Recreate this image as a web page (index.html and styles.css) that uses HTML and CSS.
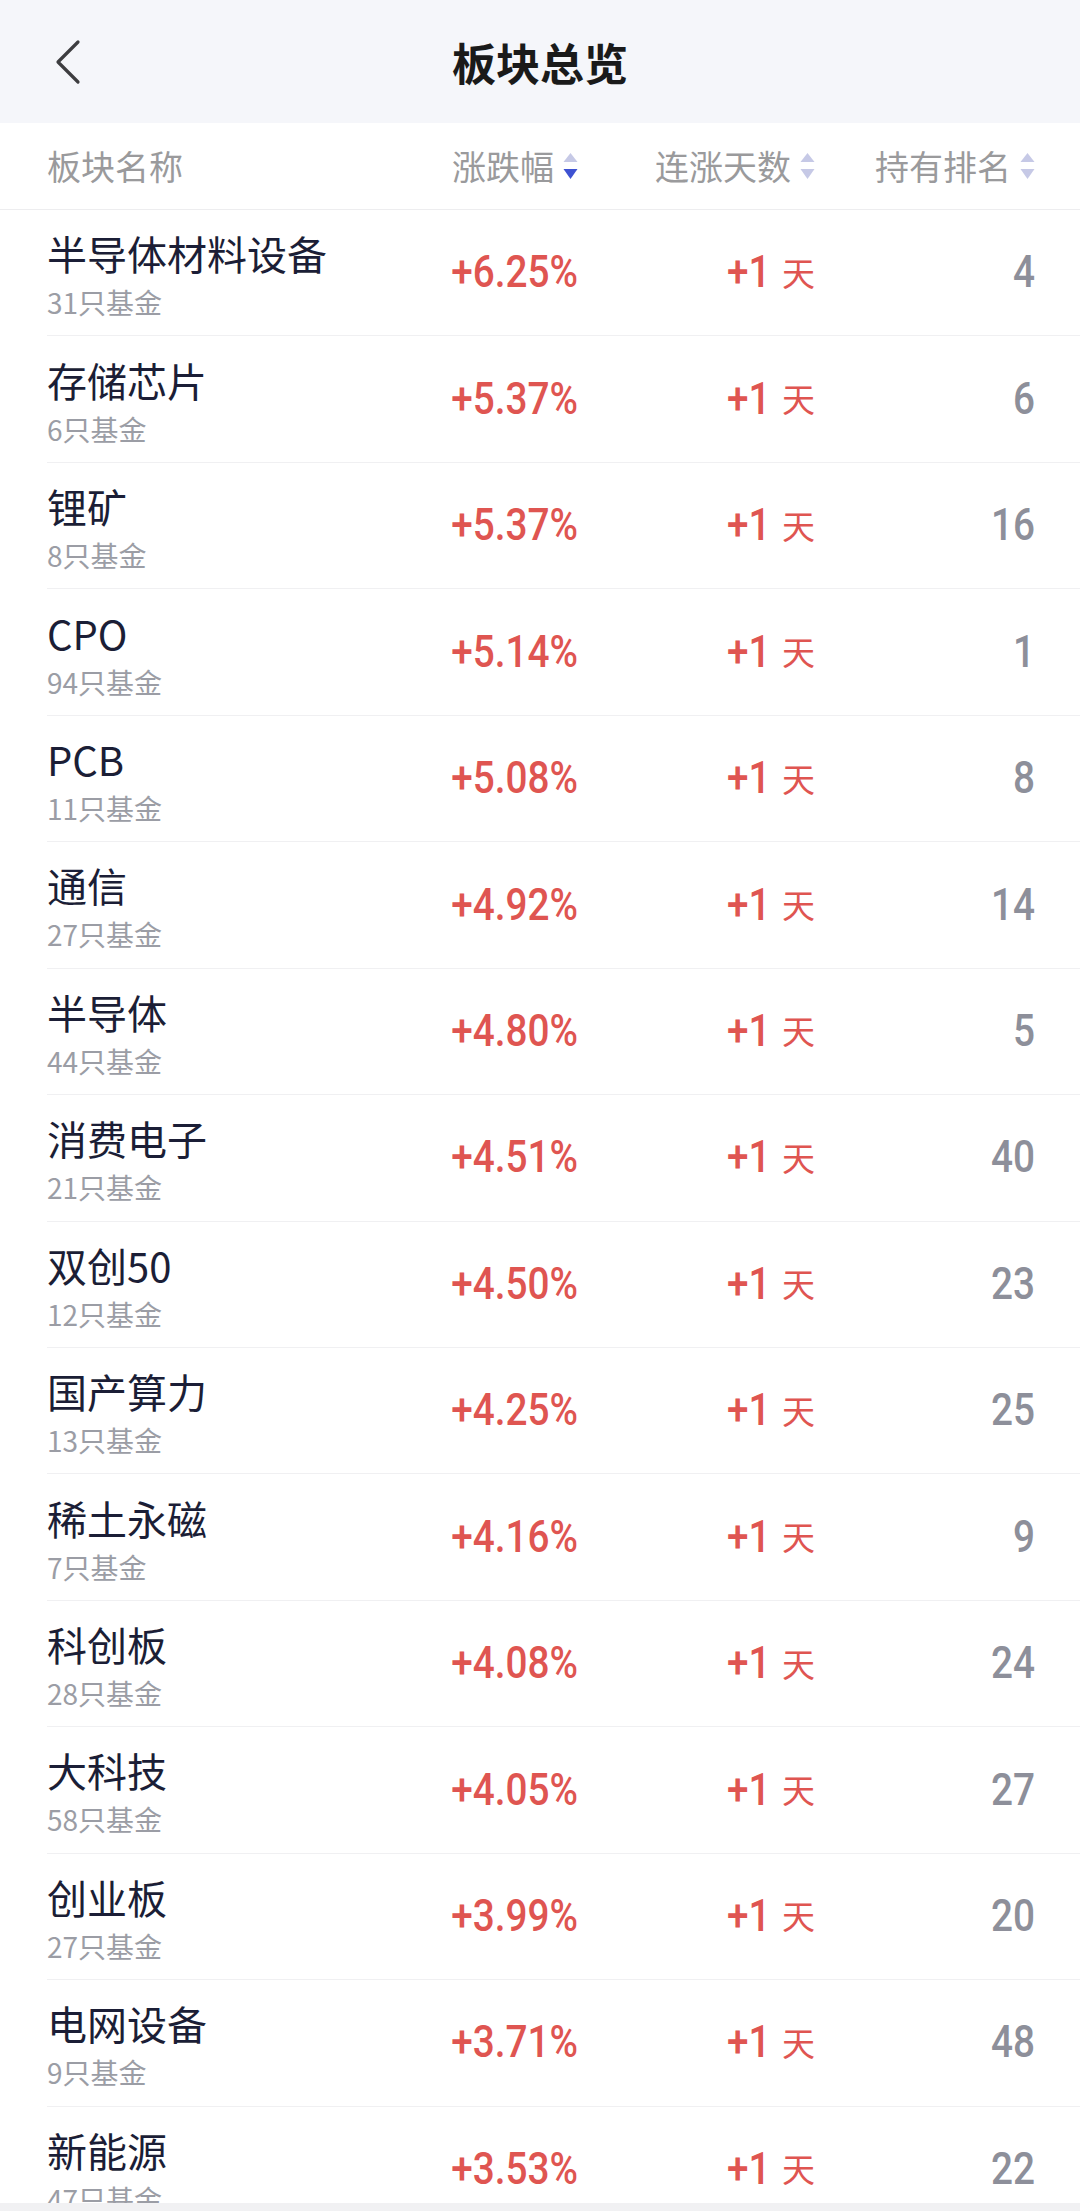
FILE: index.html
```html
<!DOCTYPE html>
<html lang="zh-CN">
<head>
    <meta charset="UTF-8">
    <meta name="viewport" content="width=device-width, initial-scale=1.0">
    <title>板块总览</title>
    <link rel="stylesheet" href="styles.css">
</head>
<body>
<div class="topbar">
    <div class="back">
        <svg width="30" height="46" viewBox="0 0 30 46">
            <path d="M24 3 L4 23 L24 43" fill="none" stroke="#3d3d40" stroke-width="3.2" stroke-linecap="round" stroke-linejoin="round"/>
        </svg>
    </div>
    <h1 class="title">板块总览</h1>
    <div></div>
</div>

<div class="thead">
    <div class="th first">板块名称</div>
    <div class="th">涨跌幅
        <svg class="sort" width="15" height="28" viewBox="0 0 15 28">
            <path d="M0.5 10 L7.5 1 L14.5 10 Z" fill="#c6c9e6"/>
            <path d="M0.5 17 L14.5 17 L7.5 27 Z" fill="#3e52d2"/>
        </svg>
    </div>
    <div class="th">连涨天数
        <svg class="sort" width="15" height="28" viewBox="0 0 15 28">
            <path d="M0.5 10 L7.5 1 L14.5 10 Z" fill="#c6c9e6"/>
            <path d="M0.5 17 L14.5 17 L7.5 27 Z" fill="#c6c9e6"/>
        </svg>
    </div>
    <div class="th">持有排名
        <svg class="sort" width="15" height="28" viewBox="0 0 15 28">
            <path d="M0.5 10 L7.5 1 L14.5 10 Z" fill="#c6c9e6"/>
            <path d="M0.5 17 L14.5 17 L7.5 27 Z" fill="#c6c9e6"/>
        </svg>
    </div>
</div>

<ul class="list">
    <li class="row">
        <div class="info"><div class="name">半导体材料设备</div><div class="count">31只基金</div></div>
        <div class="cell"><span class="num up">+6.25%</span></div>
        <div class="cell"><span class="num up">+1</span><span class="day">天</span></div>
        <div class="cell"><span class="num rank">4</span></div>
    </li>
    <li class="row">
        <div class="info"><div class="name">存储芯片</div><div class="count">6只基金</div></div>
        <div class="cell"><span class="num up">+5.37%</span></div>
        <div class="cell"><span class="num up">+1</span><span class="day">天</span></div>
        <div class="cell"><span class="num rank">6</span></div>
    </li>
    <li class="row">
        <div class="info"><div class="name">锂矿</div><div class="count">8只基金</div></div>
        <div class="cell"><span class="num up">+5.37%</span></div>
        <div class="cell"><span class="num up">+1</span><span class="day">天</span></div>
        <div class="cell"><span class="num rank">16</span></div>
    </li>
    <li class="row">
        <div class="info"><div class="name">CPO</div><div class="count">94只基金</div></div>
        <div class="cell"><span class="num up">+5.14%</span></div>
        <div class="cell"><span class="num up">+1</span><span class="day">天</span></div>
        <div class="cell"><span class="num rank">1</span></div>
    </li>
    <li class="row">
        <div class="info"><div class="name">PCB</div><div class="count">11只基金</div></div>
        <div class="cell"><span class="num up">+5.08%</span></div>
        <div class="cell"><span class="num up">+1</span><span class="day">天</span></div>
        <div class="cell"><span class="num rank">8</span></div>
    </li>
    <li class="row">
        <div class="info"><div class="name">通信</div><div class="count">27只基金</div></div>
        <div class="cell"><span class="num up">+4.92%</span></div>
        <div class="cell"><span class="num up">+1</span><span class="day">天</span></div>
        <div class="cell"><span class="num rank">14</span></div>
    </li>
    <li class="row">
        <div class="info"><div class="name">半导体</div><div class="count">44只基金</div></div>
        <div class="cell"><span class="num up">+4.80%</span></div>
        <div class="cell"><span class="num up">+1</span><span class="day">天</span></div>
        <div class="cell"><span class="num rank">5</span></div>
    </li>
    <li class="row">
        <div class="info"><div class="name">消费电子</div><div class="count">21只基金</div></div>
        <div class="cell"><span class="num up">+4.51%</span></div>
        <div class="cell"><span class="num up">+1</span><span class="day">天</span></div>
        <div class="cell"><span class="num rank">40</span></div>
    </li>
    <li class="row">
        <div class="info"><div class="name">双创50</div><div class="count">12只基金</div></div>
        <div class="cell"><span class="num up">+4.50%</span></div>
        <div class="cell"><span class="num up">+1</span><span class="day">天</span></div>
        <div class="cell"><span class="num rank">23</span></div>
    </li>
    <li class="row">
        <div class="info"><div class="name">国产算力</div><div class="count">13只基金</div></div>
        <div class="cell"><span class="num up">+4.25%</span></div>
        <div class="cell"><span class="num up">+1</span><span class="day">天</span></div>
        <div class="cell"><span class="num rank">25</span></div>
    </li>
    <li class="row">
        <div class="info"><div class="name">稀土永磁</div><div class="count">7只基金</div></div>
        <div class="cell"><span class="num up">+4.16%</span></div>
        <div class="cell"><span class="num up">+1</span><span class="day">天</span></div>
        <div class="cell"><span class="num rank">9</span></div>
    </li>
    <li class="row">
        <div class="info"><div class="name">科创板</div><div class="count">28只基金</div></div>
        <div class="cell"><span class="num up">+4.08%</span></div>
        <div class="cell"><span class="num up">+1</span><span class="day">天</span></div>
        <div class="cell"><span class="num rank">24</span></div>
    </li>
    <li class="row">
        <div class="info"><div class="name">大科技</div><div class="count">58只基金</div></div>
        <div class="cell"><span class="num up">+4.05%</span></div>
        <div class="cell"><span class="num up">+1</span><span class="day">天</span></div>
        <div class="cell"><span class="num rank">27</span></div>
    </li>
    <li class="row">
        <div class="info"><div class="name">创业板</div><div class="count">27只基金</div></div>
        <div class="cell"><span class="num up">+3.99%</span></div>
        <div class="cell"><span class="num up">+1</span><span class="day">天</span></div>
        <div class="cell"><span class="num rank">20</span></div>
    </li>
    <li class="row">
        <div class="info"><div class="name">电网设备</div><div class="count">9只基金</div></div>
        <div class="cell"><span class="num up">+3.71%</span></div>
        <div class="cell"><span class="num up">+1</span><span class="day">天</span></div>
        <div class="cell"><span class="num rank">48</span></div>
    </li>
    <li class="row">
        <div class="info"><div class="name">新能源</div><div class="count">47只基金</div></div>
        <div class="cell"><span class="num up">+3.53%</span></div>
        <div class="cell"><span class="num up">+1</span><span class="day">天</span></div>
        <div class="cell"><span class="num rank">22</span></div>
    </li>
</ul>

<div class="navbar"></div>
</body>
</html>
```

FILE: styles.css
```css
* {
    margin: 0;
    padding: 0;
    box-sizing: border-box;
}

html, body {
    width: 100%;
    height: 100%;
    overflow: hidden;
}

body {
    font-family: "Noto Sans CJK SC", "Noto Sans", sans-serif;
    background: #fff;
}

.topbar {
    height: 123px;
    background: #f5f6fa;
    display: grid;
    grid-template-columns: 1fr auto 1fr;
    align-items: center;
}

.back {
    padding-left: 54px;
    display: flex;
    align-items: center;
}

.title {
    font-size: 44px;
    font-weight: 700;
    color: #1a1a1a;
    line-height: 1;
}

.thead {
    height: 87px;
    display: grid;
    grid-template-columns: 1fr 180px 237px 220px;
    align-items: center;
    padding: 0 45px 0 47px;
    border-bottom: 1px solid #ededef;
}

.th {
    font-size: 34px;
    color: #9a9a9c;
    display: flex;
    justify-content: flex-end;
    align-items: center;
    gap: 9px;
    line-height: 1.45;
}

.th.first {
    justify-content: flex-start;
}

.list {
    list-style-type: none;
}

.row {
    height: 126.44px;
    margin-left: 47px;
    padding-right: 45px;
    border-bottom: 1px solid #f0f0f2;
    display: grid;
    grid-template-columns: 1fr 180px 237px 220px;
    align-items: center;
}

.info {
    display: flex;
    flex-direction: column;
    padding-top: 2px;
}

.name {
    font-size: 40px;
    color: #1b1e36;
    line-height: 58px;
}

.count {
    font-size: 28px;
    color: #9b9da5;
    line-height: 41px;
}

.cell {
    display: flex;
    justify-content: flex-end;
    align-items: center;
}

.num {
    font-family: Roboto, "Liberation Sans", sans-serif;
    font-size: 44px;
    font-weight: 500;
    line-height: 1.2;
    display: inline-block;
    transform: scaleX(0.88);
    transform-origin: right center;
}

.up {
    color: #df5551;
}

.rank {
    color: #8d8f9a;
}

.day {
    font-size: 33px;
    color: #df5551;
    margin-left: 12px;
    line-height: 1.45;
}

.navbar {
    position: fixed;
    left: 0;
    right: 0;
    bottom: 0;
    height: 8px;
    background: #f1f1f3;
}
```
